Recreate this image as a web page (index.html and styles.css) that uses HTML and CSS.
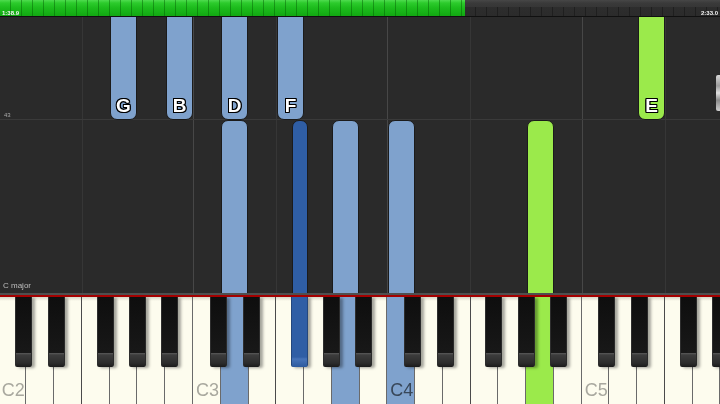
FILE: index.html
```html
<!DOCTYPE html>
<html>
<head>
<meta charset="utf-8">
<link rel="stylesheet" href="styles.css">
</head>
<body>
<div class="app">
  <div class="topbar">
    <div class="progress" style="width:465px"></div>
    <div class="rest"></div>
    <span class="time time-left">1:38.9</span>
    <span class="time time-right">2:33.0</span>
  </div>

  <div class="roll">
    <div class="vline f" style="--x:82"></div>
    <div class="vline c" style="--x:193"></div>
    <div class="vline f" style="--x:276"></div>
    <div class="vline c" style="--x:387"></div>
    <div class="vline f" style="--x:470"></div>
    <div class="vline c" style="--x:582"></div>
    <div class="vline f" style="--x:665"></div>
    <div class="hline"></div>
    <span class="measure">43</span>
    <span class="keysig">C major</span>

    <div class="note upper blue" style="--x:110"><span>G</span></div>
    <div class="note upper blue" style="--x:166"><span>B</span></div>
    <div class="note upper blue" style="--x:221"><span>D</span></div>
    <div class="note upper blue" style="--x:277"><span>F</span></div>
    <div class="note upper green" style="--x:638"><span>E</span></div>

    <div class="note lower blue" style="--x:221"></div>
    <div class="note lower dark narrow" style="--x:292"></div>
    <div class="note lower blue" style="--x:332"></div>
    <div class="note lower blue" style="--x:388"></div>
    <div class="note lower green" style="--x:527"></div>

    <div class="edge-handle"></div>
  </div>

  <div class="divider"></div>

  <div class="keyboard">
    <div class="octave">
      <div class="wk"><span class="lbl">C2</span></div>
      <div class="wk"></div><div class="wk"></div><div class="wk"></div>
      <div class="wk"></div><div class="wk"></div><div class="wk"></div>
      <div class="bk cs"></div><div class="bk ds"></div><div class="bk fs"></div><div class="bk gs"></div><div class="bk as"></div>
    </div>
    <div class="octave">
      <div class="wk"><span class="lbl">C3</span></div>
      <div class="wk hl-blue"></div><div class="wk"></div><div class="wk"></div>
      <div class="wk"></div><div class="wk hl-blue"></div><div class="wk"></div>
      <div class="bk cs"></div><div class="bk ds"></div><div class="bk fs hl-dark"></div><div class="bk gs"></div><div class="bk as"></div>
    </div>
    <div class="octave">
      <div class="wk hl-blue"><span class="lbl">C4</span></div>
      <div class="wk"></div><div class="wk"></div><div class="wk"></div>
      <div class="wk"></div><div class="wk hl-green"></div><div class="wk"></div>
      <div class="bk cs"></div><div class="bk ds"></div><div class="bk fs"></div><div class="bk gs"></div><div class="bk as"></div>
    </div>
    <div class="octave">
      <div class="wk"><span class="lbl">C5</span></div>
      <div class="wk"></div><div class="wk"></div><div class="wk"></div>
      <div class="wk"></div><div class="wk"></div><div class="wk"></div>
      <div class="bk cs"></div><div class="bk ds"></div><div class="bk fs"></div><div class="bk gs"></div><div class="bk as"></div>
    </div>
  </div>
</div>
</body>
</html>
```

FILE: styles.css
```css
* { box-sizing: border-box; }
html, body {
  margin: 0;
  padding: 0;
  width: 720px;
  height: 404px;
  overflow: hidden;
  background: #292929;
  font-family: "Liberation Sans", Arial, sans-serif;
}
.app {
  width: 720px;
  height: 404px;
  display: flex;
  flex-direction: column;
  overflow: hidden;
}

/* top progress bar */
.topbar {
  height: 17px;
  flex: 0 0 17px;
  display: flex;
  position: relative;
  border-bottom: 1px solid #101010;
}
.progress {
  height: 16px;
  background:
    repeating-linear-gradient(90deg, transparent 0 10px, rgba(0, 90, 0, 0.45) 10px 11px),
    linear-gradient(#4fdc4f 0, #2ccb2c 3px, #1cbb1c 8px, #12a812 16px);
}
.rest {
  flex: 1;
  height: 16px;
  background:
    repeating-linear-gradient(90deg, transparent 0 10px, #1f1f1f 10px 11px) left bottom / 100% 9px no-repeat,
    linear-gradient(#474747 0, #3a3a3a 3px, #363636 7px, #2d2d2d 7px, #2b2b2b 16px);
}
.time {
  position: absolute;
  top: 10px;
  font-size: 6px;
  line-height: 6px;
  color: #f4f4f4;
  font-weight: bold;
}
.time-left { left: 2px; }
.time-right { right: 2px; }

/* piano roll */
.roll {
  position: relative;
  height: 276px;
  flex: 0 0 276px;
  background: #2a2a2a;
  overflow: hidden;
}
.vline {
  position: absolute;
  top: 0;
  bottom: 0;
  left: calc(var(--x) * 1px);
  width: 1px;
}
.vline.c { background: #474747; }
.vline.f { background: #363636; }
.hline {
  position: absolute;
  left: 0;
  right: 0;
  top: 102px;
  height: 1px;
  background: #3a3a3a;
}
.measure {
  position: absolute;
  left: 4px;
  top: 95px;
  font-size: 6px;
  color: #a8a8a8;
}
.keysig {
  position: absolute;
  left: 3px;
  top: 264px;
  font-size: 8px;
  color: #bdbdbd;
}

.note {
  position: absolute;
  left: calc(var(--x) * 1px);
  width: 27px;
  border: 1px solid #1b1b1b;
  display: flex;
  flex-direction: column;
  justify-content: flex-end;
  align-items: center;
}
.note.narrow { width: 16px; }
.note.upper {
  top: -10px;
  height: 113px;
  border-radius: 0 0 7px 7px;
  padding-bottom: 4px;
}
.note.lower {
  top: 103px;
  height: 200px;
  border-radius: 7px 7px 0 0;
}
.note.blue { background: #7fa2cd; }
.note.green { background: #9bea4b; }
.note.dark { background: #2f5ea5; }
.note span {
  font-family: "Liberation Sans", Arial, sans-serif;
  font-weight: bold;
  font-size: 19px;
  line-height: 19px;
  color: #ffffff;
  text-shadow:
    1px 0 0 #000, -1px 0 0 #000, 0 1px 0 #000, 0 -1px 0 #000,
    1px 1px 0 #000, -1px -1px 0 #000, 1px -1px 0 #000, -1px 1px 0 #000;
}

.edge-handle {
  position: absolute;
  right: 0;
  top: 58px;
  width: 4px;
  height: 36px;
  border-radius: 2px 0 0 2px;
  background: linear-gradient(#d8d8d8, #9a9a9a 30%, #e0e0e0 50%, #8a8a8a 70%, #cfcfcf);
}

/* divider */
.divider {
  height: 4px;
  flex: 0 0 4px;
  background: #4f4f4f;
  border-bottom: 2px solid #a40000;
}

/* keyboard */
.keyboard {
  flex: 1;
  display: flex;
  margin-left: -1.3px;
  overflow: hidden;
  background: #fdfcee;
}
.octave {
  position: relative;
  flex: 0 0 194.32px;
  width: 194.32px;
  display: flex;
}
.wk {
  flex: 0 0 27.76px;
  width: 27.76px;
  height: 107px;
  background: linear-gradient(#d8d7c8 0, #fdfcee 4px);
  border-right: 1px solid #6a6a6a;
  display: flex;
  align-items: flex-end;
  padding: 0 0 5px 3px;
}
.wk:nth-child(3) { border-right-color: #4a4a4a; }
.wk.hl-blue { background: #7fa2cd; }
.wk.hl-green { background: #9bea4b; }
.lbl {
  font-size: 18px;
  line-height: 18px;
  color: #aaaaaa;
  mix-blend-mode: multiply;
}
.wk.hl-blue .lbl { color: #6f6f6f; }

.bk {
  position: absolute;
  top: 0;
  width: 17px;
  height: 70px;
  background:
    linear-gradient(#0e0e0e 0, #181818 56px, #5a5a5a 56px, #3c3c3c 58px, #2c2c2c 66px, #1a1a1a 70px);
  border-left: 1px solid #2e2e2e;
  border-right: 1px solid #2a2a2a;
  border-radius: 0 0 2px 2px;
  box-shadow: 3px 1px 3px rgba(0, 0, 0, 0.35);
}
.bk.hl-dark {
  background: linear-gradient(#2f5ea5 0, #2f5ea5 60px, #4673b8 62px, #2d5a9e 70px);
  border-color: #24477d;
}
.cs { left: 16.6px; }
.ds { left: 49.6px; }
.fs { left: 98px; }
.gs { left: 130.3px; }
.as { left: 162.3px; }
```
